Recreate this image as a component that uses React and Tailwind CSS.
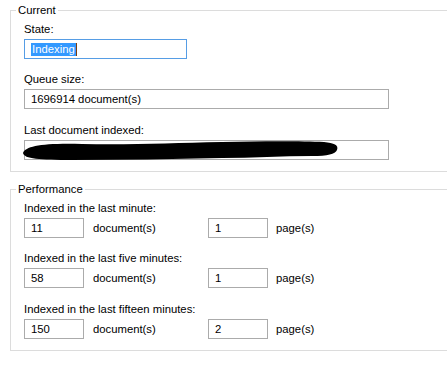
const Field = ({ value, className = "" }) => (
  <div
    className={`h-[20px] border border-[#ababab] bg-white pl-[6px] leading-[18px] ${className}`}
  >
    {value}
  </div>
);

const Rate = ({ label, docs, pages, top = "mt-[14px]" }) => (
  <>
    <div className={`${top} leading-[14px]`}>{label}</div>
    <div className="mt-[3px] flex items-center">
      <Field value={docs} className="w-[60px]" />
      <span className="ml-[9px] w-[115px]">document(s)</span>
      <Field value={pages} className="w-[60px]" />
      <span className="ml-[8px]">page(s)</span>
    </div>
  </>
);

export default function App() {
  return (
    <div className="w-[447px] h-[373px] overflow-hidden bg-white pt-[3px] font-['Liberation_Sans',Arial,sans-serif] text-[11.3px] text-black">
      <fieldset className="ml-[10px] w-[450px] border border-[#dcdcdc] pl-[13px] pb-[11px]">
        <legend className="-ml-[8px] px-[2px] leading-[14px]">Current</legend>
        <div className="mt-[5px] leading-[14px]">State:</div>
        <div className="mt-[3px] flex h-[20px] w-[163px] items-center border border-[#569de5] pl-[6px]">
          <span className="bg-[#3399ff] px-[1px] leading-[13px] text-white">Indexing</span>
          <span className="h-[13px] w-px bg-[#7a3c10]" />
        </div>
        <div className="mt-[13px] leading-[14px]">Queue size:</div>
        <Field value="1696914 document(s)" className="mt-[3px] w-[365px]" />
        <div className="mt-[14px] leading-[14px]">Last document indexed:</div>
        <div className="relative mt-[3px]">
          <Field value="" className="w-[365px]" />
          <svg
            className="absolute left-[-2px] top-[1px]"
            width="318"
            height="20"
            viewBox="0 0 318 20"
          >
            <path
              d="M1 12 C4 5 20 2 60 3 C110 4 150 2 200 1 C240 0 280 0 302 1 C312 2 317 4 315 9 C313 13 306 15 290 15 C260 15 230 17 200 17 C150 18 100 19 50 19 C18 19 2 18 1 12 Z"
              fill="#000"
            />
          </svg>
        </div>
      </fieldset>

      <fieldset className="ml-[10px] mt-[10px] w-[450px] border border-[#dcdcdc] pl-[13px] pb-[11px]">
        <legend className="-ml-[8px] px-[2px] leading-[14px]">Performance</legend>
        <Rate label="Indexed in the last minute:" docs="11" pages="1" top="mt-[5px]" />
        <Rate label="Indexed in the last five minutes:" docs="58" pages="1" top="mt-[13px]" />
        <Rate label="Indexed in the last fifteen minutes:" docs="150" pages="2" />
      </fieldset>
    </div>
  );
}
